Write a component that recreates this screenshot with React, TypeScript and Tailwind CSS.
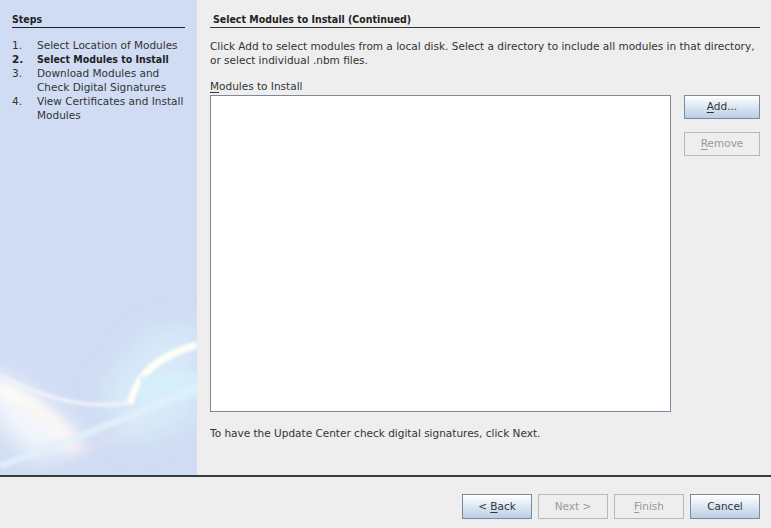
import type { ReactNode } from 'react'

const font = { fontFamily: '"DejaVu Sans", "Liberation Sans", sans-serif' }
const boldFont = { fontFamily: '"DejaVu Sans Condensed", "Liberation Sans", sans-serif' }

type Step = { num: string; lines: string[]; current?: boolean }

const steps: Step[] = [
  { num: '1.', lines: ['Select Location of Modules'] },
  { num: '2.', lines: ['Select Modules to Install'], current: true },
  { num: '3.', lines: ['Download Modules and', 'Check Digital Signatures'] },
  { num: '4.', lines: ['View Certificates and Install', 'Modules'] },
]

function Mnemonic({ children }: { children: ReactNode }) {
  return <span className="underline underline-offset-2">{children}</span>
}

function OceanButton({
  children,
  disabled,
  className,
}: {
  children: ReactNode
  disabled?: boolean
  className?: string
}) {
  if (disabled) {
    return (
      <div
        className={`flex items-center justify-center whitespace-pre border border-[#b8b8b8] bg-[#eeeeee] text-[#999999] ${className ?? ''}`}
      >
        <span>{children}</span>
      </div>
    )
  }
  return (
    <div
      className={`flex items-center justify-center whitespace-pre border border-[#7a8a99] bg-gradient-to-b from-[#ffffff] to-[#b8cfe5] text-[#333333] ${className ?? ''}`}
    >
      <span>{children}</span>
    </div>
  )
}

function Swirl() {
  return (
    <svg className="absolute left-0 top-0" width="197" height="475" viewBox="0 0 197 475">
      <defs>
        <filter id="b6" x="-50%" y="-50%" width="200%" height="200%">
          <feGaussianBlur stdDeviation="6" />
        </filter>
        <filter id="b2" x="-50%" y="-50%" width="200%" height="200%">
          <feGaussianBlur stdDeviation="1.8" />
        </filter>
        <filter id="b12" x="-50%" y="-50%" width="200%" height="200%">
          <feGaussianBlur stdDeviation="12" />
        </filter>
      </defs>
      {/* soft cyan haze */}
      <path d="M100 390 L150 330 L197 325 L197 420 L130 445 Z" fill="#dcf0fb" opacity="0.7" filter="url(#b12)" />
      {/* warm glow bottom-left */}
      <path d="M-15 370 Q45 390 85 445 L35 460 Q-5 425 -15 400 Z" fill="#ffffff" opacity="0.75" filter="url(#b12)" />
      <path d="M-5 385 Q40 405 75 448" stroke="#fffff4" strokeWidth="14" fill="none" opacity="0.9" filter="url(#b6)" />
      <path d="M25 405 Q55 425 85 452" stroke="#f8e6f3" strokeWidth="8" fill="none" opacity="0.5" filter="url(#b6)" />
      {/* main arc */}
      <path d="M0 376 Q70 412 128 403" stroke="#eef2fa" strokeWidth="4" fill="none" filter="url(#b2)" />
      <path d="M130 404 Q140 360 197 345" stroke="#fffef6" strokeWidth="7" fill="none" filter="url(#b2)" />
      <path d="M140 376 L197 372 L197 398 L140 405 Z" fill="#d6f0fb" opacity="0.85" filter="url(#b2)" />
      {/* lower streaks */}
      <path d="M0 466 Q100 430 197 388" stroke="#e2f1fb" strokeWidth="7" fill="none" opacity="0.85" filter="url(#b2)" />
      <path d="M60 452 Q120 440 140 420" stroke="#f4e8f2" strokeWidth="6" fill="none" opacity="0.5" filter="url(#b6)" />
    </svg>
  )
}

export default function App() {
  return (
    <div
      className="flex h-[528px] w-[771px] flex-col overflow-hidden whitespace-nowrap bg-[#eeeeee] text-[10.5px] text-[#333333]"
      style={font}
    >
      <div className="flex h-[475px]">
        {/* steps panel */}
        <div className="relative w-[197px] shrink-0 bg-[#cfdcf3]">
          <Swirl />
          <div className="relative px-[12px] pt-[12px]">
            <div className="border-b border-[#222222] pb-[1px] font-bold leading-[14px] text-[#222222]" style={boldFont}>
              Steps
            </div>
            <div className="mt-[10px] flex flex-col">
              {steps.map(s => (
                <div key={s.num} className={`flex leading-[14px] ${s.current ? 'font-bold text-[#222222]' : ''}`}>
                  <span className="w-[25px] shrink-0">{s.num}</span>
                  <div style={s.current ? boldFont : undefined}>
                    {s.lines.map(l => (
                      <div key={l}>{l}</div>
                    ))}
                  </div>
                </div>
              ))}
            </div>
          </div>
        </div>

        {/* content */}
        <div className="flex flex-1 flex-col pl-[13px] pr-[11px] pt-[12px]">
          <div
            className="border-b border-[#333333] pb-[1px] pl-[3px] font-bold leading-[14px] text-[#222222]"
            style={boldFont}
          >
            Select Modules to Install (Continued)
          </div>
          <div className="mt-[11px] leading-[14px]">
            Click Add to select modules from a local disk. Select a directory to include all modules in that directory,
            <br />
            or select individual .nbm files.
          </div>
          <div className="mt-[12px] leading-[14px]">
            <Mnemonic>M</Mnemonic>odules to Install
          </div>
          <div className="mt-[2px] flex gap-[13px]">
            <div className="h-[317px] w-[461px] border border-[#7a8a99] bg-white" />
            <div className="flex flex-col gap-[13px]">
              <OceanButton className="h-[24px] w-[76px]">
                <Mnemonic>A</Mnemonic>dd...
              </OceanButton>
              <OceanButton disabled className="h-[24px] w-[76px]">
                <Mnemonic>R</Mnemonic>emove
              </OceanButton>
            </div>
          </div>
          <div className="mt-[14px] leading-[14px]">To have the Update Center check digital signatures, click Next.</div>
        </div>
      </div>

      {/* separator */}
      <div className="h-[2px] bg-[#3a3a3a]" />

      {/* bottom buttons */}
      <div className="flex justify-end gap-[6px] pr-[11px] pt-[17px]">
        <OceanButton className="h-[25px] w-[70px]">
          {'< '}
          <Mnemonic>B</Mnemonic>ack
        </OceanButton>
        <OceanButton disabled className="h-[25px] w-[70px]">
          Next &gt;
        </OceanButton>
        <OceanButton disabled className="h-[25px] w-[70px]">
          <Mnemonic>F</Mnemonic>inish
        </OceanButton>
        <OceanButton className="h-[25px] w-[70px]">Cancel</OceanButton>
      </div>
    </div>
  )
}
